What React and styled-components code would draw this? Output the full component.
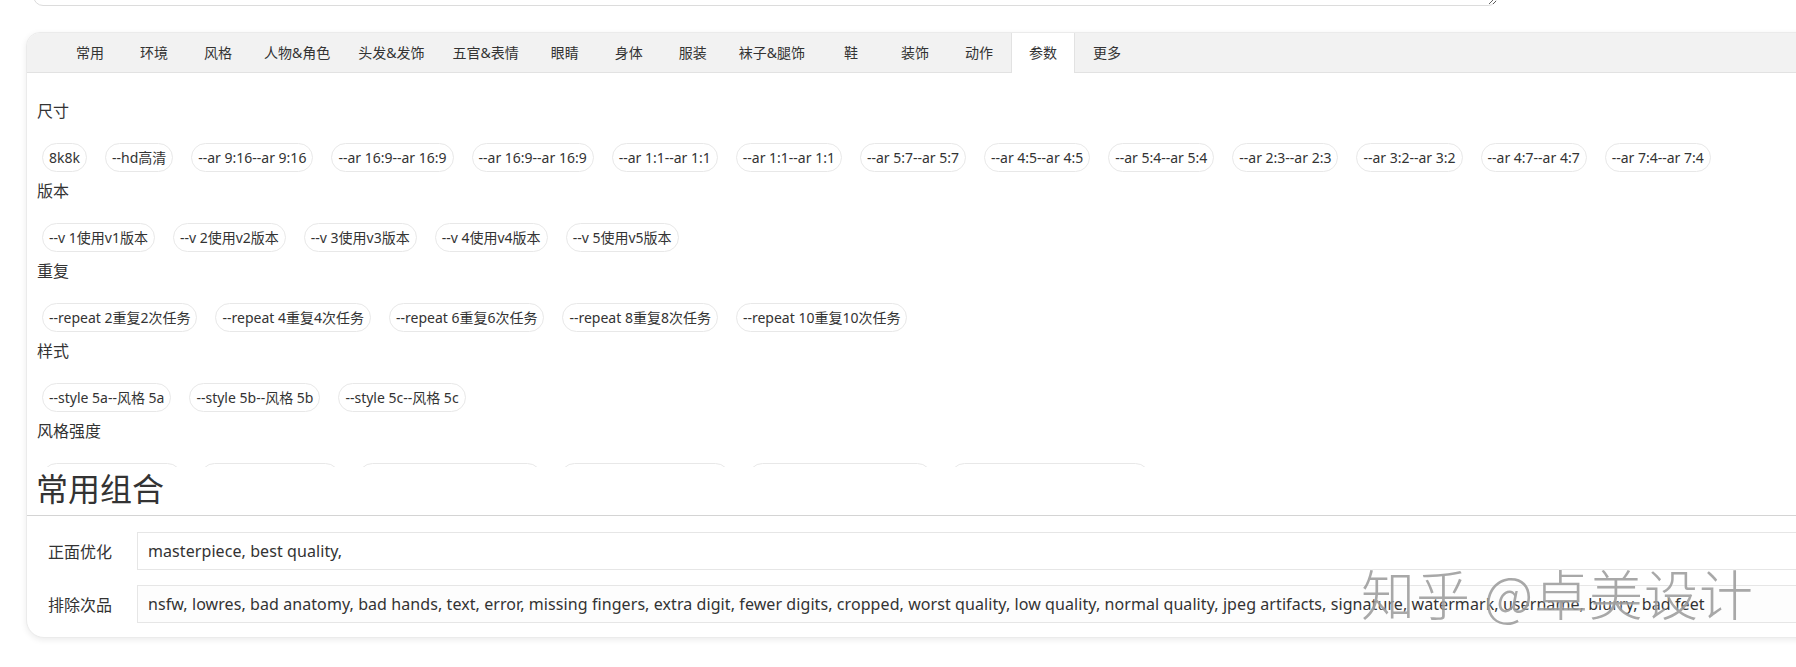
import React, { useState } from "react";
import styled, { createGlobalStyle } from "styled-components";

const GlobalStyle = createGlobalStyle`
  *, *::before, *::after {
    box-sizing: border-box;
  }

  body {
    margin: 0;
    background: #fff;
    color: #333;
    font-family: "Noto Sans", "Noto Sans CJK SC", sans-serif;
  }
`;

const Page = styled.div`
  position: relative;
  width: 1796px;
  height: 667px;
  overflow: hidden;
  background: #fff;
`;

const TopArea = styled.div`
  padding-left: 33px;
`;

const PromptBox = styled.textarea`
  display: block;
  width: 1465px;
  height: 80px;
  margin-top: -74px;
  border: 1px solid #dcdcdc;
  border-radius: 10px;
  resize: vertical;
  outline: none;
  background: #fff;
`;

const Card = styled.div`
  margin: 26px 0 0 26px;
  width: 1800px;
  background: #fff;
  border: 1px solid #ebebeb;
  border-radius: 14px 0 0 18px;
  box-shadow: 0 2px 6px rgba(0, 0, 0, 0.08);
  overflow: hidden;
`;

const TabBar = styled.ul`
  display: flex;
  align-items: flex-start;
  height: 40px;
  margin: 0;
  padding: 0 0 0 31px;
  list-style: none;
  background: #f2f2f2;
  border-bottom: 1px solid #e2e2e2;
`;

const Tab = styled.li`
  height: 40px;
  min-width: 64px;
  padding: 0 13px;
  line-height: 39px;
  font-size: 14px;
  text-align: center;
  white-space: nowrap;
  color: #333;
  cursor: pointer;
  background: ${(p) => (p.$active ? "#fff" : "transparent")};
  border-left: 1px solid ${(p) => (p.$active ? "#e2e2e2" : "transparent")};
  border-right: 1px solid ${(p) => (p.$active ? "#e2e2e2" : "transparent")};
`;

const Panel = styled.div`
  height: 394px;
  overflow: hidden;
  padding: 26px 0 0 10px;
`;

const GroupTitle = styled.div`
  height: 24px;
  line-height: 24px;
  font-size: 16px;
  color: #333;
`;

const ChipRow = styled.div`
  display: flex;
  flex-wrap: nowrap;
  gap: 18px;
  margin: 20px 0 7px 5px;
`;

const Chip = styled.span`
  flex: none;
  height: 29px;
  line-height: 27px;
  padding: 0 6px;
  font-size: 14px;
  color: #333;
  white-space: nowrap;
  border: 1px solid #e8e8e8;
  border-radius: 15px;
  background: #fff;
  cursor: pointer;
`;

const Heading = styled.h2`
  height: 49px;
  margin: 0;
  padding-left: 9px;
  line-height: 44px;
  font-size: 32px;
  font-weight: 400;
  color: #333;
  border-bottom: 1px solid #d4d4d4;
`;

const Form = styled.div`
  display: flex;
  flex-direction: column;
  gap: 15px;
  padding: 16px 0 14px;
`;

const FormRow = styled.label`
  display: flex;
  align-items: center;
`;

const FormLabel = styled.span`
  width: 110px;
  padding-left: 21px;
  font-size: 16px;
  color: #333;
`;

const Field = styled.input`
  flex: 1;
  height: 38px;
  padding: 0 10px;
  font-family: "Noto Sans", "Noto Sans CJK SC", sans-serif;
  font-size: 16px;
  letter-spacing: 0.08px;
  color: #333;
  border: 1px solid #e6e6e6;
  background: ${(p) => p.$bg || "#fff"};
  outline: none;
`;

const Watermark = styled.div`
  position: absolute;
  left: 1361px;
  top: 553px;
  font-family: "Noto Sans CJK SC", sans-serif;
  font-size: 54px;
  font-weight: 300;
  letter-spacing: 1px;
  color: rgba(110, 110, 110, 0.6);
  text-shadow: 0 0 2px rgba(255, 255, 255, 0.9);
  pointer-events: none;
  white-space: nowrap;
`;

const tabs = [
  "常用", "环境", "风格", "人物&角色", "头发&发饰", "五官&表情", "眼睛", "身体",
  "服装", "袜子&腿饰", "鞋", "装饰", "动作", "参数", "更多",
];

const groups = [
  {
    title: "尺寸",
    items: [
      "8k8k", "--hd高清", "--ar 9:16--ar 9:16", "--ar 16:9--ar 16:9", "--ar 16:9--ar 16:9",
      "--ar 1:1--ar 1:1", "--ar 1:1--ar 1:1", "--ar 5:7--ar 5:7", "--ar 4:5--ar 4:5",
      "--ar 5:4--ar 5:4", "--ar 2:3--ar 2:3", "--ar 3:2--ar 3:2", "--ar 4:7--ar 4:7",
      "--ar 7:4--ar 7:4",
    ],
  },
  {
    title: "版本",
    items: ["--v 1使用v1版本", "--v 2使用v2版本", "--v 3使用v3版本", "--v 4使用v4版本", "--v 5使用v5版本"],
  },
  {
    title: "重复",
    items: [
      "--repeat 2重复2次任务", "--repeat 4重复4次任务", "--repeat 6重复6次任务",
      "--repeat 8重复8次任务", "--repeat 10重复10次任务",
    ],
  },
  {
    title: "样式",
    items: ["--style 5a--风格 5a", "--style 5b--风格 5b", "--style 5c--风格 5c"],
  },
  {
    title: "风格强度",
    items: [
      "--stylize 50--风格 50", "--stylize 80--风格 80", "--stylize 100--风格强度 100",
      "--stylize 250--风格化 250", "--stylize 500--风格强度 500", "--stylize 1000--风格强度 1000",
    ],
  },
];

const negative =
  "nsfw, lowres, bad anatomy, bad hands, text, error, missing fingers, extra digit, fewer digits, cropped, worst quality, low quality, normal quality, jpeg artifacts, signature, watermark, username, blurry, bad feet";

const App = () => {
  const [active, setActive] = useState("参数");

  return (
    <>
      <GlobalStyle />
      <Page>
        <TopArea>
          <PromptBox />
        </TopArea>

        <Card>
          <TabBar>
            {tabs.map((t) => (
              <Tab key={t} $active={t === active} onClick={() => setActive(t)}>
                {t}
              </Tab>
            ))}
          </TabBar>

          <Panel>
            {groups.map((g) => (
              <div key={g.title}>
                <GroupTitle>{g.title}</GroupTitle>
                <ChipRow>
                  {g.items.map((it, i) => (
                    <Chip key={i}>{it}</Chip>
                  ))}
                </ChipRow>
              </div>
            ))}
          </Panel>

          <Heading>常用组合</Heading>

          <Form>
            <FormRow>
              <FormLabel>正面优化</FormLabel>
              <Field defaultValue="masterpiece, best quality," />
            </FormRow>
            <FormRow>
              <FormLabel>排除次品</FormLabel>
              <Field defaultValue={negative} $bg="#fdfdfd" />
            </FormRow>
          </Form>
        </Card>

        <Watermark>知乎 @卓美设计</Watermark>
      </Page>
    </>
  );
};

export default App;
